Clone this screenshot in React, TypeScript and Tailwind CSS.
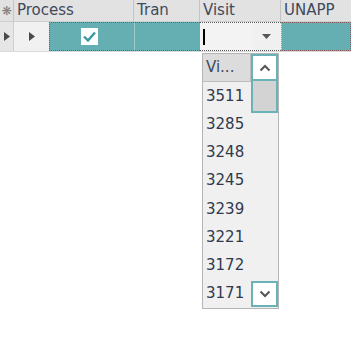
import React from 'react'

const visits = ['3511', '3285', '3248', '3245', '3239', '3221', '3172', '3171']

function RightTri({ className }: { className?: string }) {
  return (
    <svg width="6" height="9" viewBox="0 0 6 9" className={className}>
      <path d="M0 0 L6 4.5 L0 9 Z" fill="#4a4a4a" />
    </svg>
  )
}

function Chevron({ up }: { up?: boolean }) {
  return (
    <svg width="12" height="8" viewBox="0 0 12 8">
      <path
        d={up ? 'M1.5 6.5 L6 2 L10.5 6.5' : 'M1.5 1.5 L6 6 L10.5 1.5'}
        stroke="#555"
        strokeWidth="2"
        fill="none"
      />
    </svg>
  )
}

function App() {
  return (
    <div
      className="relative w-[351px] h-[348px] bg-white overflow-hidden text-[15px]"
      style={{ fontFamily: '"DejaVu Sans", sans-serif' }}
    >
      {/* header */}
      <div className="flex h-[22px] bg-[#e2e2e2] border-b border-[#cfcfcf] text-[#3f4a5c]">
        <div className="w-[14px] flex items-center justify-center border-r border-[#c4c4c4] text-[#7a7a7a] text-[12px]">
          ❋
        </div>
        <div className="w-[120px] pl-[3px] flex items-center border-r border-[#c4c4c4]">Process</div>
        <div className="w-[66px] pl-[3px] flex items-center border-r border-[#c4c4c4]">Tran</div>
        <div className="w-[81px] pl-[3px] flex items-center border-r border-[#c4c4c4]">Visit</div>
        <div className="flex-1 pl-[3px] flex items-center">UNAPP</div>
      </div>

      {/* data row */}
      <div className="flex h-[30px] border-b border-[#dadada]">
        <div className="w-[14px] bg-[#e6e6e6] border-r border-[#cfcfcf] flex items-center justify-center">
          <RightTri />
        </div>
        <div className="w-[35px] bg-[#f1f1f1] flex items-center justify-center">
          <RightTri />
        </div>
        <div className="w-[151px] flex bg-[#65afb3] border-y border-l border-dotted border-[#8c5a5a]">
          <div className="w-[85px] border-r border-[#9fc9cb] flex items-center pl-[31px]">
            <div className="w-[17px] h-[17px] bg-white flex items-center justify-center">
              <svg width="13" height="11" viewBox="0 0 13 11">
                <path d="M1 5.5 L5 9.5 L12 1.5" stroke="#3d9aa0" strokeWidth="2.4" fill="none" />
              </svg>
            </div>
          </div>
          <div className="flex-1" />
        </div>
        <div className="w-[81px] flex border-y border-dotted border-[#555]">
          <div className="w-[52px] bg-[#f3f3f3] flex items-center pl-[3px]">
            <div className="w-[2px] h-[16px] bg-black" />
          </div>
          <div className="flex-1 bg-[#f0f0f0] flex items-center justify-center">
            <svg width="9" height="5" viewBox="0 0 9 5">
              <path d="M0 0 L9 0 L4.5 5 Z" fill="#555" />
            </svg>
          </div>
        </div>
        <div className="flex-1 bg-[#65afb3] border-y border-r border-dotted border-[#8c5a5a] border-l border-l-[#cfcfcf]" />
      </div>

      {/* dropdown list */}
      <div className="absolute left-[202px] top-[53px] w-[77px] h-[256px] bg-[#f0f0f0] border border-[#b5b5b5] flex">
        <div className="w-[48px] flex flex-col text-[#2f3a4e]">
          <div className="h-[28px] bg-[#dcdcdc] border-r border-b border-[#bdbdbd] pl-[3px] flex items-center text-[#3f4a5c]">
            Vi...
          </div>
          {visits.map((v) => (
            <div key={v} className="h-[28.2px] pl-[3px] flex items-center">
              {v}
            </div>
          ))}
        </div>
        <div className="flex-1 flex flex-col pb-[1px]">
          <div className="h-[27px] bg-white border-2 border-[#6ab2b6] flex items-center justify-center">
            <Chevron up />
          </div>
          <div className="h-[32px] bg-[#d3d3d3] border-2 border-t-0 border-[#6ab2b6]" />
          <div className="flex-1" />
          <div className="h-[26px] bg-white border-2 border-[#6ab2b6] flex items-center justify-center">
            <Chevron />
          </div>
        </div>
      </div>
    </div>
  )
}

export default App
